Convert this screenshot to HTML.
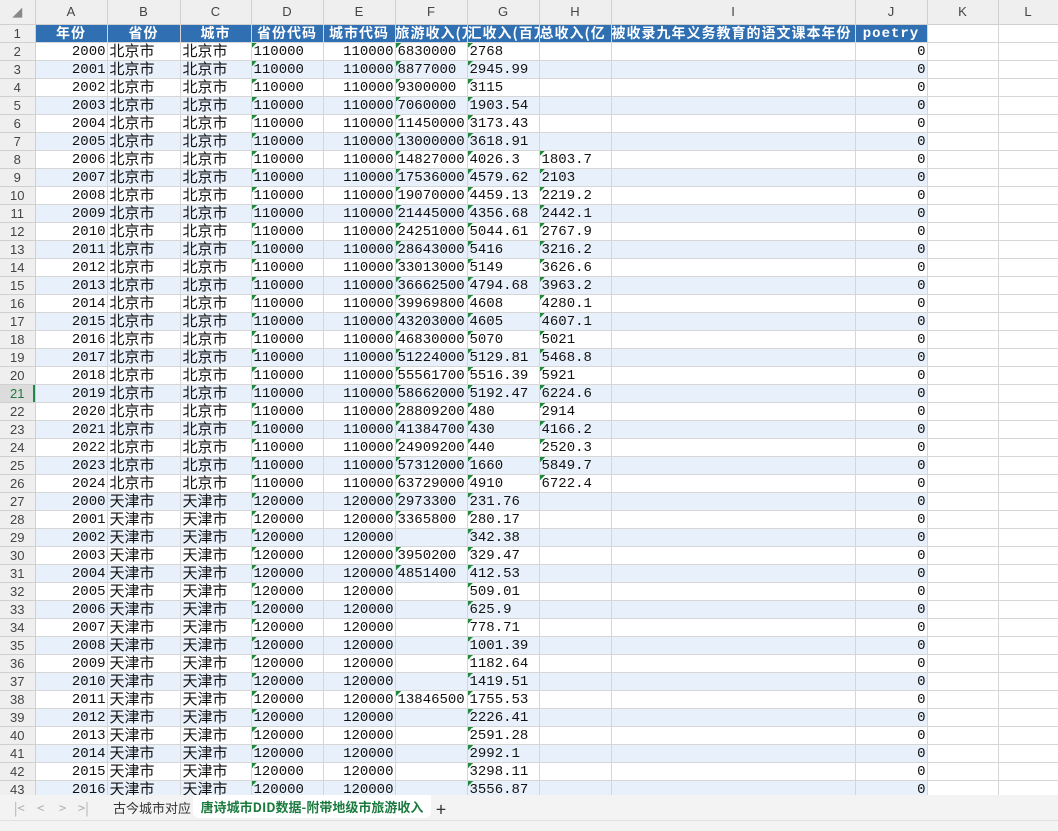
<!DOCTYPE html>
<html><head><meta charset="utf-8"><style>
html,body{margin:0;padding:0;width:1058px;height:830px;overflow:hidden;background:#fff;font-family:"Liberation Mono","Noto Sans CJK SC",monospace;}
table{border-collapse:collapse;table-layout:fixed;position:absolute;left:0;top:0;width:1058px;}
td{height:15px;line-height:15px;padding:2px 1px 0 2px;vertical-align:top;border-right:1px solid #d6d6d6;border-bottom:1px solid #d6d6d6;font-size:14px;white-space:nowrap;overflow:hidden;color:#111;}
tr.ch td{height:24px;line-height:24px;padding:0;vertical-align:middle;background:#efefef;color:#444;text-align:center;font-family:"Liberation Sans",sans-serif;font-size:13px;border-color:#d0d0d0}
td.rn{background-color:#efefef;color:#444;text-align:center;font-family:"Liberation Sans",sans-serif;font-size:13px;border-color:#d0d0d0;padding:1px 0 0 0;height:16px;line-height:16px}
td.rn.sel{background-color:#dcdcdc;color:#1e7a3e;box-shadow:inset -2px 0 0 #1e8a4a}
tr.h td.c{background-color:#2f6fb2;color:#fff;font-weight:bold;text-align:center;font-family:"Noto Sans CJK SC",sans-serif;font-size:14px;border-color:#d6d6d6;letter-spacing:1px;padding:0;height:17px;line-height:17px}
tr.h td.c.p{font-family:"Liberation Mono",monospace;padding-top:2px;height:15px;line-height:15px}
tr.s td.c{background-color:#e8f1fb}
.r{text-align:right}
td.k{font-family:"Noto Sans CJK SC",sans-serif;font-size:15px;padding-top:0;height:17px;line-height:16px}
.t{background-image:linear-gradient(135deg,#1f8a3b 50%,transparent 50%);background-size:5px 5px;background-repeat:no-repeat;background-position:0 0}
#tabs{position:absolute;left:0;top:795px;width:1058px;height:25px;background:#f3f3f3;font-family:"Noto Sans CJK SC",sans-serif;font-size:13px;color:#333}
#tabs span{position:absolute;top:3px}
#act{position:absolute;left:193px;top:0;width:238px;height:23px;background:#fff;border-radius:0 0 6px 6px;color:#1a7a3e;font-weight:bold;text-align:center;line-height:23px;font-size:13px}
#status{position:absolute;left:0;top:820px;width:1058px;height:10px;background:#f3f3f3;border-top:1px solid #e0e0e0}
</style></head><body>
<table>
<colgroup><col style="width:35px"><col style="width:72px"><col style="width:73px"><col style="width:71px"><col style="width:72px"><col style="width:72px"><col style="width:72px"><col style="width:72px"><col style="width:72px"><col style="width:244px"><col style="width:72px"><col style="width:71px"><col style="width:60px"></colgroup>
<tr class="ch"><td style="color:#888">◢</td><td>A</td><td>B</td><td>C</td><td>D</td><td>E</td><td>F</td><td>G</td><td>H</td><td>I</td><td>J</td><td>K</td><td>L</td></tr>
<tr class="h"><td class="rn">1</td><td class="c">年份</td><td class="c">省份</td><td class="c">城市</td><td class="c">省份代码</td><td class="c">城市代码</td><td class="c" style="text-align:left">旅游收入(万</td><td class="c" style="text-align:left">汇收入(百万</td><td class="c" style="text-align:left">总收入(亿</td><td class="c" style="text-align:left">被收录九年义务教育的语文课本年份</td><td class="c p">poetry</td><td></td><td></td></tr>
<tr><td class="rn">2</td><td class="c r">2000</td><td class="c k">北京市</td><td class="c k">北京市</td><td class="c t">110000</td><td class="c r">110000</td><td class="c t">6830000</td><td class="c t">2768</td><td class="c"></td><td class="c"></td><td class="c r">0</td><td></td><td></td></tr>
<tr class="s"><td class="rn">3</td><td class="c r">2001</td><td class="c k">北京市</td><td class="c k">北京市</td><td class="c t">110000</td><td class="c r">110000</td><td class="c t">8877000</td><td class="c t">2945.99</td><td class="c"></td><td class="c"></td><td class="c r">0</td><td></td><td></td></tr>
<tr><td class="rn">4</td><td class="c r">2002</td><td class="c k">北京市</td><td class="c k">北京市</td><td class="c t">110000</td><td class="c r">110000</td><td class="c t">9300000</td><td class="c t">3115</td><td class="c"></td><td class="c"></td><td class="c r">0</td><td></td><td></td></tr>
<tr class="s"><td class="rn">5</td><td class="c r">2003</td><td class="c k">北京市</td><td class="c k">北京市</td><td class="c t">110000</td><td class="c r">110000</td><td class="c t">7060000</td><td class="c t">1903.54</td><td class="c"></td><td class="c"></td><td class="c r">0</td><td></td><td></td></tr>
<tr><td class="rn">6</td><td class="c r">2004</td><td class="c k">北京市</td><td class="c k">北京市</td><td class="c t">110000</td><td class="c r">110000</td><td class="c t">11450000</td><td class="c t">3173.43</td><td class="c"></td><td class="c"></td><td class="c r">0</td><td></td><td></td></tr>
<tr class="s"><td class="rn">7</td><td class="c r">2005</td><td class="c k">北京市</td><td class="c k">北京市</td><td class="c t">110000</td><td class="c r">110000</td><td class="c t">13000000</td><td class="c t">3618.91</td><td class="c"></td><td class="c"></td><td class="c r">0</td><td></td><td></td></tr>
<tr><td class="rn">8</td><td class="c r">2006</td><td class="c k">北京市</td><td class="c k">北京市</td><td class="c t">110000</td><td class="c r">110000</td><td class="c t">14827000</td><td class="c t">4026.3</td><td class="c t">1803.7</td><td class="c"></td><td class="c r">0</td><td></td><td></td></tr>
<tr class="s"><td class="rn">9</td><td class="c r">2007</td><td class="c k">北京市</td><td class="c k">北京市</td><td class="c t">110000</td><td class="c r">110000</td><td class="c t">17536000</td><td class="c t">4579.62</td><td class="c t">2103</td><td class="c"></td><td class="c r">0</td><td></td><td></td></tr>
<tr><td class="rn">10</td><td class="c r">2008</td><td class="c k">北京市</td><td class="c k">北京市</td><td class="c t">110000</td><td class="c r">110000</td><td class="c t">19070000</td><td class="c t">4459.13</td><td class="c t">2219.2</td><td class="c"></td><td class="c r">0</td><td></td><td></td></tr>
<tr class="s"><td class="rn">11</td><td class="c r">2009</td><td class="c k">北京市</td><td class="c k">北京市</td><td class="c t">110000</td><td class="c r">110000</td><td class="c t">21445000</td><td class="c t">4356.68</td><td class="c t">2442.1</td><td class="c"></td><td class="c r">0</td><td></td><td></td></tr>
<tr><td class="rn">12</td><td class="c r">2010</td><td class="c k">北京市</td><td class="c k">北京市</td><td class="c t">110000</td><td class="c r">110000</td><td class="c t">24251000</td><td class="c t">5044.61</td><td class="c t">2767.9</td><td class="c"></td><td class="c r">0</td><td></td><td></td></tr>
<tr class="s"><td class="rn">13</td><td class="c r">2011</td><td class="c k">北京市</td><td class="c k">北京市</td><td class="c t">110000</td><td class="c r">110000</td><td class="c t">28643000</td><td class="c t">5416</td><td class="c t">3216.2</td><td class="c"></td><td class="c r">0</td><td></td><td></td></tr>
<tr><td class="rn">14</td><td class="c r">2012</td><td class="c k">北京市</td><td class="c k">北京市</td><td class="c t">110000</td><td class="c r">110000</td><td class="c t">33013000</td><td class="c t">5149</td><td class="c t">3626.6</td><td class="c"></td><td class="c r">0</td><td></td><td></td></tr>
<tr class="s"><td class="rn">15</td><td class="c r">2013</td><td class="c k">北京市</td><td class="c k">北京市</td><td class="c t">110000</td><td class="c r">110000</td><td class="c t">36662500</td><td class="c t">4794.68</td><td class="c t">3963.2</td><td class="c"></td><td class="c r">0</td><td></td><td></td></tr>
<tr><td class="rn">16</td><td class="c r">2014</td><td class="c k">北京市</td><td class="c k">北京市</td><td class="c t">110000</td><td class="c r">110000</td><td class="c t">39969800</td><td class="c t">4608</td><td class="c t">4280.1</td><td class="c"></td><td class="c r">0</td><td></td><td></td></tr>
<tr class="s"><td class="rn">17</td><td class="c r">2015</td><td class="c k">北京市</td><td class="c k">北京市</td><td class="c t">110000</td><td class="c r">110000</td><td class="c t">43203000</td><td class="c t">4605</td><td class="c t">4607.1</td><td class="c"></td><td class="c r">0</td><td></td><td></td></tr>
<tr><td class="rn">18</td><td class="c r">2016</td><td class="c k">北京市</td><td class="c k">北京市</td><td class="c t">110000</td><td class="c r">110000</td><td class="c t">46830000</td><td class="c t">5070</td><td class="c t">5021</td><td class="c"></td><td class="c r">0</td><td></td><td></td></tr>
<tr class="s"><td class="rn">19</td><td class="c r">2017</td><td class="c k">北京市</td><td class="c k">北京市</td><td class="c t">110000</td><td class="c r">110000</td><td class="c t">51224000</td><td class="c t">5129.81</td><td class="c t">5468.8</td><td class="c"></td><td class="c r">0</td><td></td><td></td></tr>
<tr><td class="rn">20</td><td class="c r">2018</td><td class="c k">北京市</td><td class="c k">北京市</td><td class="c t">110000</td><td class="c r">110000</td><td class="c t">55561700</td><td class="c t">5516.39</td><td class="c t">5921</td><td class="c"></td><td class="c r">0</td><td></td><td></td></tr>
<tr class="s"><td class="rn sel">21</td><td class="c r">2019</td><td class="c k">北京市</td><td class="c k">北京市</td><td class="c t">110000</td><td class="c r">110000</td><td class="c t">58662000</td><td class="c t">5192.47</td><td class="c t">6224.6</td><td class="c"></td><td class="c r">0</td><td></td><td></td></tr>
<tr><td class="rn">22</td><td class="c r">2020</td><td class="c k">北京市</td><td class="c k">北京市</td><td class="c t">110000</td><td class="c r">110000</td><td class="c t">28809200</td><td class="c t">480</td><td class="c t">2914</td><td class="c"></td><td class="c r">0</td><td></td><td></td></tr>
<tr class="s"><td class="rn">23</td><td class="c r">2021</td><td class="c k">北京市</td><td class="c k">北京市</td><td class="c t">110000</td><td class="c r">110000</td><td class="c t">41384700</td><td class="c t">430</td><td class="c t">4166.2</td><td class="c"></td><td class="c r">0</td><td></td><td></td></tr>
<tr><td class="rn">24</td><td class="c r">2022</td><td class="c k">北京市</td><td class="c k">北京市</td><td class="c t">110000</td><td class="c r">110000</td><td class="c t">24909200</td><td class="c t">440</td><td class="c t">2520.3</td><td class="c"></td><td class="c r">0</td><td></td><td></td></tr>
<tr class="s"><td class="rn">25</td><td class="c r">2023</td><td class="c k">北京市</td><td class="c k">北京市</td><td class="c t">110000</td><td class="c r">110000</td><td class="c t">57312000</td><td class="c t">1660</td><td class="c t">5849.7</td><td class="c"></td><td class="c r">0</td><td></td><td></td></tr>
<tr><td class="rn">26</td><td class="c r">2024</td><td class="c k">北京市</td><td class="c k">北京市</td><td class="c t">110000</td><td class="c r">110000</td><td class="c t">63729000</td><td class="c t">4910</td><td class="c t">6722.4</td><td class="c"></td><td class="c r">0</td><td></td><td></td></tr>
<tr class="s"><td class="rn">27</td><td class="c r">2000</td><td class="c k">天津市</td><td class="c k">天津市</td><td class="c t">120000</td><td class="c r">120000</td><td class="c t">2973300</td><td class="c t">231.76</td><td class="c"></td><td class="c"></td><td class="c r">0</td><td></td><td></td></tr>
<tr><td class="rn">28</td><td class="c r">2001</td><td class="c k">天津市</td><td class="c k">天津市</td><td class="c t">120000</td><td class="c r">120000</td><td class="c t">3365800</td><td class="c t">280.17</td><td class="c"></td><td class="c"></td><td class="c r">0</td><td></td><td></td></tr>
<tr class="s"><td class="rn">29</td><td class="c r">2002</td><td class="c k">天津市</td><td class="c k">天津市</td><td class="c t">120000</td><td class="c r">120000</td><td class="c"></td><td class="c t">342.38</td><td class="c"></td><td class="c"></td><td class="c r">0</td><td></td><td></td></tr>
<tr><td class="rn">30</td><td class="c r">2003</td><td class="c k">天津市</td><td class="c k">天津市</td><td class="c t">120000</td><td class="c r">120000</td><td class="c t">3950200</td><td class="c t">329.47</td><td class="c"></td><td class="c"></td><td class="c r">0</td><td></td><td></td></tr>
<tr class="s"><td class="rn">31</td><td class="c r">2004</td><td class="c k">天津市</td><td class="c k">天津市</td><td class="c t">120000</td><td class="c r">120000</td><td class="c t">4851400</td><td class="c t">412.53</td><td class="c"></td><td class="c"></td><td class="c r">0</td><td></td><td></td></tr>
<tr><td class="rn">32</td><td class="c r">2005</td><td class="c k">天津市</td><td class="c k">天津市</td><td class="c t">120000</td><td class="c r">120000</td><td class="c"></td><td class="c t">509.01</td><td class="c"></td><td class="c"></td><td class="c r">0</td><td></td><td></td></tr>
<tr class="s"><td class="rn">33</td><td class="c r">2006</td><td class="c k">天津市</td><td class="c k">天津市</td><td class="c t">120000</td><td class="c r">120000</td><td class="c"></td><td class="c t">625.9</td><td class="c"></td><td class="c"></td><td class="c r">0</td><td></td><td></td></tr>
<tr><td class="rn">34</td><td class="c r">2007</td><td class="c k">天津市</td><td class="c k">天津市</td><td class="c t">120000</td><td class="c r">120000</td><td class="c"></td><td class="c t">778.71</td><td class="c"></td><td class="c"></td><td class="c r">0</td><td></td><td></td></tr>
<tr class="s"><td class="rn">35</td><td class="c r">2008</td><td class="c k">天津市</td><td class="c k">天津市</td><td class="c t">120000</td><td class="c r">120000</td><td class="c"></td><td class="c t">1001.39</td><td class="c"></td><td class="c"></td><td class="c r">0</td><td></td><td></td></tr>
<tr><td class="rn">36</td><td class="c r">2009</td><td class="c k">天津市</td><td class="c k">天津市</td><td class="c t">120000</td><td class="c r">120000</td><td class="c"></td><td class="c t">1182.64</td><td class="c"></td><td class="c"></td><td class="c r">0</td><td></td><td></td></tr>
<tr class="s"><td class="rn">37</td><td class="c r">2010</td><td class="c k">天津市</td><td class="c k">天津市</td><td class="c t">120000</td><td class="c r">120000</td><td class="c"></td><td class="c t">1419.51</td><td class="c"></td><td class="c"></td><td class="c r">0</td><td></td><td></td></tr>
<tr><td class="rn">38</td><td class="c r">2011</td><td class="c k">天津市</td><td class="c k">天津市</td><td class="c t">120000</td><td class="c r">120000</td><td class="c t">13846500</td><td class="c t">1755.53</td><td class="c"></td><td class="c"></td><td class="c r">0</td><td></td><td></td></tr>
<tr class="s"><td class="rn">39</td><td class="c r">2012</td><td class="c k">天津市</td><td class="c k">天津市</td><td class="c t">120000</td><td class="c r">120000</td><td class="c"></td><td class="c t">2226.41</td><td class="c"></td><td class="c"></td><td class="c r">0</td><td></td><td></td></tr>
<tr><td class="rn">40</td><td class="c r">2013</td><td class="c k">天津市</td><td class="c k">天津市</td><td class="c t">120000</td><td class="c r">120000</td><td class="c"></td><td class="c t">2591.28</td><td class="c"></td><td class="c"></td><td class="c r">0</td><td></td><td></td></tr>
<tr class="s"><td class="rn">41</td><td class="c r">2014</td><td class="c k">天津市</td><td class="c k">天津市</td><td class="c t">120000</td><td class="c r">120000</td><td class="c"></td><td class="c t">2992.1</td><td class="c"></td><td class="c"></td><td class="c r">0</td><td></td><td></td></tr>
<tr><td class="rn">42</td><td class="c r">2015</td><td class="c k">天津市</td><td class="c k">天津市</td><td class="c t">120000</td><td class="c r">120000</td><td class="c"></td><td class="c t">3298.11</td><td class="c"></td><td class="c"></td><td class="c r">0</td><td></td><td></td></tr>
<tr class="s"><td class="rn">43</td><td class="c r">2016</td><td class="c k">天津市</td><td class="c k">天津市</td><td class="c t">120000</td><td class="c r">120000</td><td class="c"></td><td class="c t">3556.87</td><td class="c"></td><td class="c"></td><td class="c r">0</td><td></td><td></td></tr>
</table>
<div id="tabs">
<span style="left:14px;color:#aaa">|&lt;</span><span style="left:37px;color:#aaa">&lt;</span><span style="left:59px;color:#aaa">&gt;</span><span style="left:78px;color:#aaa">&gt;|</span>
<span style="left:113px">古今城市对应</span>
<div id="act">唐诗城市DID数据-附带地级市旅游收入</div>
<span style="left:436px;top:1px;font-size:18px;color:#333">+</span>
</div>
<div id="status"></div>
</body></html>
